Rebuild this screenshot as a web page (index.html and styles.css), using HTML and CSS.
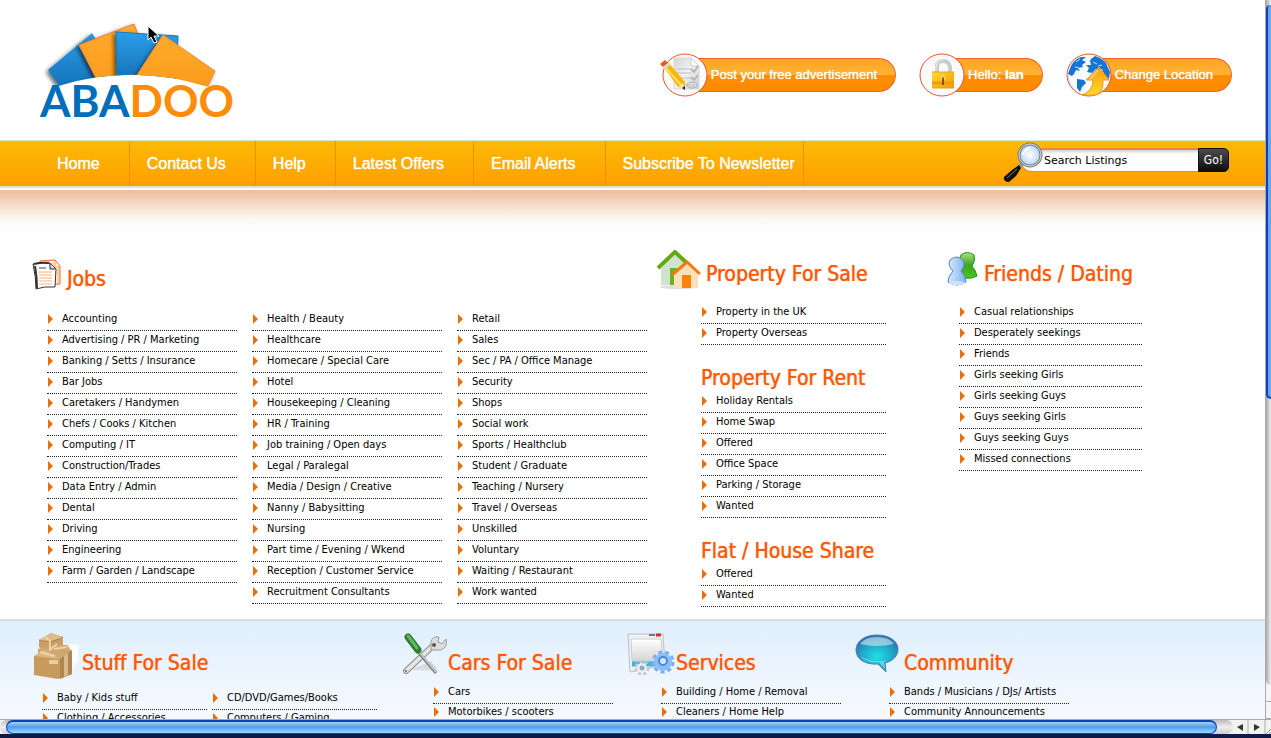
FILE: index.html
```html
<!DOCTYPE html>
<html lang="en">
<head>
<meta charset="utf-8">
<title>Abadoo</title>
<link rel="stylesheet" href="styles.css">
</head>
<body>
<div class="window">
<div class="viewport">
<div class="page">
<header class="header">
  <a class="logo" href="#" aria-label="Abadoo home">
    <svg width="200" height="116" viewBox="0 0 200 116">
      <defs>
        <linearGradient id="lb" x1="0" y1="0" x2="0" y2="1"><stop offset="0" stop-color="#2a9fe8"/><stop offset="1" stop-color="#146fb4"/></linearGradient>
        <linearGradient id="lo" x1="0" y1="0" x2="0" y2="1"><stop offset="0" stop-color="#ffab2c"/><stop offset="1" stop-color="#fb9a1c"/></linearGradient>
        <filter id="sh" x="-20%" y="-20%" width="140%" height="140%"><feDropShadow dx="-2" dy="2" stdDeviation="2" flood-color="#000" flood-opacity=".6"/></filter>
        <clipPath id="arc"><path d="M0 0H200V74L165 66Q92 44 22 65L0 72Z"/></clipPath>
      </defs>
      <g clip-path="url(#arc)">
        <path d="M8 50 52 13 82 60 22 70Z" fill="url(#lb)" filter="url(#sh)"/>
        <path d="M39 25 94 4 116 60 60 66Z" fill="url(#lo)" stroke="#f07b3a" filter="url(#sh)"/>
        <path d="M76 12 138 16 136 62 77 62Z" fill="url(#lb)" stroke="#1876bd" filter="url(#sh)"/>
        <path d="M123 15 175 51 166 70 90 66Z" fill="url(#lo)" stroke="#f58c3c" filter="url(#sh)"/>
      </g>
      <text class="logo-text" x="0" y="97"><tspan fill="#006eb8">ABA</tspan><tspan fill="#ff8c08">DOO</tspan></text>
    </svg>
  </a>
  <nav class="account" aria-label="Account">
    <a class="pill pill-post" href="#">
      <svg class="pill-icon" width="50" height="46" viewBox="0 0 50 46">
        <defs><linearGradient id="paper" x1="0" y1="0" x2="1" y2="1"><stop offset="0" stop-color="#d3d5d8"/><stop offset=".5" stop-color="#f2f2f2"/><stop offset="1" stop-color="#c8cace"/></linearGradient></defs>
        <ellipse cx="27" cy="23" rx="22" ry="21" fill="#fcfafa" stroke="#e9552a"/>
        <path d="M16 6H33L41 14V37H16Z" fill="url(#paper)" stroke="#d6d8da"/><path d="M33 6V14H41Z" fill="#fff" stroke="#c9ccd0"/>
        <path d="M19 17H35M19 21H33M19 26H33M21 33H36" stroke="#bbbec3" fill="none"/>
        <path d="M33 17l3 3 4-6M33 25l3 3 4-5" stroke="#b2b5ba" stroke-width="2" fill="none"/><ellipse cx="34" cy="33" rx="5" ry="3" fill="none" stroke="#aeb2b8"/>
        <path d="M5 14 10 10 27 30 27 37 20 35Z" fill="#f9b70c"/><path d="M6 14 23 33" stroke="#ffe25a" stroke-width="2"/><path d="M2 12 7 8 10 11 5 15Z" fill="#e9582a"/><path d="M5 15 10 11 12 13 7 17Z" fill="#ddd"/><path d="M20 35l5-4 2 6Z" fill="#ffe1a4"/><path d="M24 36l3-2v4Z" fill="#222"/>
      </svg>
      <span class="pill-label">Post your free advertisement</span>
    </a>
    <a class="pill pill-user" href="#">
      <svg class="pill-icon" width="50" height="46" viewBox="0 0 50 46">
        <defs><linearGradient id="gold" x1="0" y1="0" x2="1" y2="1"><stop offset="0" stop-color="#ffdc30"/><stop offset=".5" stop-color="#f9bb10"/><stop offset="1" stop-color="#ef9810"/></linearGradient></defs>
        <ellipse cx="27" cy="23" rx="22" ry="21" fill="#fbfafa" stroke="#e9552a"/>
        <path d="M22 20V15Q22 9 28 9T35 15V20" fill="none" stroke="#c9cccd" stroke-width="4"/><path d="M21 18V15Q22 8 28 8" fill="none" stroke="#eee" stroke-width="1"/>
        <path d="M17 20H39V36H17Z" fill="url(#gold)"/><path d="M17 20H39M17 36H39" stroke="#e59d20"/><path d="M17 31H39" stroke="#ec9f0c" stroke-width="3"/>
        <circle cx="28" cy="26" r="2" fill="#c47a10" stroke="#fff0a0"/><path d="M27 27h2v6h-2Z" fill="#8c4b00"/>
      </svg>
      <span class="pill-label">Hello: <b>Ian</b></span>
    </a>
    <a class="pill pill-location" href="#">
      <svg class="pill-icon" width="50" height="46" viewBox="0 0 50 46">
        <defs><linearGradient id="arr" x1="0" y1="0" x2="0" y2="1"><stop offset="0" stop-color="#ff9b12"/><stop offset="1" stop-color="#ffd92c"/></linearGradient></defs>
        <ellipse cx="27" cy="23" rx="22" ry="21" fill="#f7fbff" stroke="#e9552a"/>
        <path d="M7 19Q10 8 19 5L24 5 20 8 24 10 20 13 21 15 16 16 18 19 14 18 12 22 10 24 6 22Z" fill="#1675d2"/><path d="M15 27 22 28 24 31 20 35 18 40 15 36Z" fill="#1675d2"/>
        <path d="M29 7 33 4Q40 6 44 11L48 20 47 27 43 25 40 17 34 17 30 21 25 20 27 16 24 13 29 13 28 9Z" fill="#1875d0"/><path d="M14 10l4-3M13 15l4 1M31 10l4 2M36 14l4-1" stroke="#bfe3ff"/><path d="M6 22Q6 33 15 40" fill="none" stroke="#b9d8f4"/>
        <path d="M37 15 47 28H41Q42 43 31 43H20Q31 39 31 28H24Z" fill="url(#arr)" stroke="#f49a12"/><path d="M36 18 28 27" stroke="#ffc77d" stroke-width="2"/>
      </svg>
      <span class="pill-label">Change Location</span>
    </a>
  </nav>
</header>
<div class="bar">
  <nav class="menu" aria-label="Main">
    <a href="#">Home</a><a href="#">Contact Us</a><a href="#">Help</a><a href="#">Latest Offers</a><a href="#">Email Alerts</a><a href="#">Subscribe To Newsletter</a>
  </nav>
  <form class="search">
    <svg class="lens" width="42" height="44" viewBox="0 0 42 44">
      <defs><radialGradient id="glass"><stop offset="0" stop-color="#fff"/><stop offset="1" stop-color="#b4d4ee"/></radialGradient></defs>
      <path d="M22 21 16 27" stroke="#999" stroke-width="4"/><path d="M17 24 10 29 2 36Q1 41 7 41L14 35 19 27Z" fill="#111"/><path d="M15 28 5 37" stroke="#777" stroke-width="1"/>
      <circle cx="28" cy="14" r="11" fill="url(#glass)" stroke="#7b8188" stroke-width="3"/><circle cx="28" cy="14" r="11" fill="none" stroke="#d5dadf"/><path d="M21 14Q22 8 28 7" stroke="#fff" stroke-width="2" fill="none"/>
    </svg>
    <input class="search-box" type="text" value="Search Listings" aria-label="Search Listings"><button class="go" type="button">Go!</button>
  </form>
</div>
<main class="upper">
  <section class="jobs">
    <div class="head">
      <svg width="30" height="32" viewBox="0 0 30 32"><path d="M8 2 23 1 28 7 28 25 9 26Z" fill="#fff3e8" stroke="#f0612a"/><path d="M11 5H22M23 2V8H28M26 9V24" stroke="#ffa84a" fill="none"/><path d="M1 5Q10 3 18 4L24 10 23 28Q12 27 4 30Q4 18 1 5Z" fill="#fff" stroke="#333"/><path d="M3 7Q5 18 5 29" stroke="#333" stroke-width="2" fill="none"/><path d="M2 5Q10 3 17 4" stroke="#333" stroke-width="2" fill="none"/><path d="M18 4V10H23" fill="#ddd" stroke="#222"/><path d="M7 9H14" stroke="#444"/><path d="M6 13H20M7 16H20M7 19H20M7 22H20M7 25H20" stroke="#f9b080"/></svg>
      <h2>Jobs</h2>
    </div>
    <div class="lists three">
      <ul class="list"><li><a href="#">Accounting</a></li><li><a href="#">Advertising / PR / Marketing</a></li><li><a href="#">Banking / Setts / Insurance</a></li><li><a href="#">Bar Jobs</a></li><li><a href="#">Caretakers / Handymen</a></li><li><a href="#">Chefs / Cooks / Kitchen</a></li><li><a href="#">Computing / IT</a></li><li><a href="#">Construction/Trades</a></li><li><a href="#">Data Entry / Admin</a></li><li><a href="#">Dental</a></li><li><a href="#">Driving</a></li><li><a href="#">Engineering</a></li><li><a href="#">Farm / Garden / Landscape</a></li></ul>
      <ul class="list"><li><a href="#">Health / Beauty</a></li><li><a href="#">Healthcare</a></li><li><a href="#">Homecare / Special Care</a></li><li><a href="#">Hotel</a></li><li><a href="#">Housekeeping / Cleaning</a></li><li><a href="#">HR / Training</a></li><li><a href="#">Job training / Open days</a></li><li><a href="#">Legal / Paralegal</a></li><li><a href="#">Media / Design / Creative</a></li><li><a href="#">Nanny / Babysitting</a></li><li><a href="#">Nursing</a></li><li><a href="#">Part time / Evening / Wkend</a></li><li><a href="#">Reception / Customer Service</a></li><li><a href="#">Recruitment Consultants</a></li></ul>
      <ul class="list"><li><a href="#">Retail</a></li><li><a href="#">Sales</a></li><li><a href="#">Sec / PA / Office Manage</a></li><li><a href="#">Security</a></li><li><a href="#">Shops</a></li><li><a href="#">Social work</a></li><li><a href="#">Sports / Healthclub</a></li><li><a href="#">Student / Graduate</a></li><li><a href="#">Teaching / Nursery</a></li><li><a href="#">Travel / Overseas</a></li><li><a href="#">Unskilled</a></li><li><a href="#">Voluntary</a></li><li><a href="#">Waiting / Restaurant</a></li><li><a href="#">Work wanted</a></li></ul>
    </div>
  </section>
  <section class="property">
    <div class="head">
      <svg width="44" height="40" viewBox="0 0 44 40"><ellipse cx="22" cy="37" rx="19" ry="2" fill="#ddd"/><path d="M4 18 18 5 32 18V35H4Z" fill="#cfe3cd"/><path d="M13 18H20V35H13Z" fill="#67b22a"/><path d="M1 18 18 2 34 17" fill="none" stroke="#62a916" stroke-width="4"/><path d="M17 24 30 12 41 23V38H17Z" fill="#ffe0bd"/><path d="M25 25H34V38H25Z" fill="#fb830c"/><path d="M15 25 30 12 43 24" fill="none" stroke="#f37a0c" stroke-width="3"/></svg>
      <h2>Property For Sale</h2>
    </div>
    <div class="indent">
      <ul class="list"><li><a href="#">Property in the UK</a></li><li><a href="#">Property Overseas</a></li></ul>
      <h2 class="sub">Property For Rent</h2>
      <ul class="list"><li><a href="#">Holiday Rentals</a></li><li><a href="#">Home Swap</a></li><li><a href="#">Offered</a></li><li><a href="#">Office Space</a></li><li><a href="#">Parking / Storage</a></li><li><a href="#">Wanted</a></li></ul>
      <h2 class="sub">Flat / House Share</h2>
      <ul class="list"><li><a href="#">Offered</a></li><li><a href="#">Wanted</a></li></ul>
    </div>
  </section>
  <section class="friends">
    <div class="head">
      <svg width="31" height="38" viewBox="0 0 31 38"><defs><linearGradient id="gr" x1="0" y1="0" x2="0" y2="1"><stop offset="0" stop-color="#aee080"/><stop offset=".5" stop-color="#3aa81c"/><stop offset="1" stop-color="#4ac81e"/></linearGradient><linearGradient id="bl" x1="0" y1="0" x2="1" y2="0"><stop offset="0" stop-color="#d6eaff"/><stop offset="1" stop-color="#7db2f2"/></linearGradient></defs><path d="M16 15Q11 9 14 4Q20 -1 27 4Q29 9 25 15Q29 20 30 25Q23 29 14 26Q13 20 16 15Z" fill="url(#gr)" stroke="#258b14"/><path d="M6 20Q0 14 3 9Q10 3 16 9Q19 14 14 20Q19 25 19 31Q10 37 1 31Q1 25 6 20Z" fill="url(#bl)" stroke="#5686bd"/><ellipse cx="10" cy="32" rx="8" ry="2" fill="#cfe2f7"/></svg>
      <h2>Friends / Dating</h2>
    </div>
    <ul class="list"><li><a href="#">Casual relationships</a></li><li><a href="#">Desperately seekings</a></li><li><a href="#">Friends</a></li><li><a href="#">Girls seeking Girls</a></li><li><a href="#">Girls seeking Guys</a></li><li><a href="#">Guys seeking Girls</a></li><li><a href="#">Guys seeking Guys</a></li><li><a href="#">Missed connections</a></li></ul>
  </section>
</main>
<div class="lower">
  <section class="stuff">
    <div class="head">
      <svg width="47" height="48" viewBox="0 0 47 48"><path d="M37 12l9 1-1 15-6 10Z" fill="#fff" opacity=".8"/><path d="M6 8 18 1 30 5V15L18 21 6 15Z" fill="#c99d63"/><path d="M6 8 18 10 30 5M18 10V20" stroke="#a77d49" fill="none"/><path d="M6 8 18 1 30 5 18 9Z" fill="#dfbd8a"/><path d="M5 17 18 13 34 13 39 20 25 31 5 26Z" fill="#d0a76e"/><path d="M1 24 15 21 27 27 39 18V42L25 47 1 43Z" fill="#c79a5e"/><path d="M27 27 39 18V42L27 47Z" fill="#b2874f"/><path d="M1 24 11 18 27 27Z" fill="#ddb982"/><path d="M31 24l4-3v22l-4 2Z" fill="#d9ba8d"/><path d="M12 5l5 4v10M24 12l-6 5M7 20l15 4M21 17l13-2" stroke="#ecd2a6" stroke-width="2" fill="none"/><path d="M16 28h9v4h-9Z" fill="#e7cda0"/></svg>
      <h2>Stuff For Sale</h2>
    </div>
    <div class="lists two">
      <ul class="list"><li><a href="#">Baby / Kids stuff</a></li><li><a href="#">Clothing / Accessories</a></li></ul>
      <ul class="list"><li><a href="#">CD/DVD/Games/Books</a></li><li><a href="#">Computers / Gaming</a></li></ul>
    </div>
  </section>
  <section class="category">
    <div class="head">
      <svg width="44" height="42" viewBox="0 0 44 42"><path d="M7 37 36 38 28 28Z" fill="#bbb" opacity=".4"/><path d="M3 38 33 10" stroke="#888" stroke-width="6" stroke-linecap="round"/><path d="M3 38 33 10" stroke="#e4e4e4" stroke-width="4" stroke-linecap="round"/><path d="M28 9Q29 3 36 4L35 9 39 11 43 6Q45 14 38 17L28 17Z" fill="#ddd" stroke="#999"/><circle cx="31" cy="12" r="2" fill="#555"/><circle cx="3" cy="38" r="1" fill="#666"/><path d="M16 20 33 40" stroke="#888" stroke-width="3"/><path d="M17 20 33 39" stroke="#eee"/><path d="M5 4 15 17" stroke="#2f7a34" stroke-width="7" stroke-linecap="round"/><path d="M5 3 14 15" stroke="#64b85d" stroke-width="3" stroke-linecap="round"/></svg>
      <h2>Cars For Sale</h2>
    </div>
    <ul class="list"><li><a href="#">Cars</a></li><li><a href="#">Motorbikes / scooters</a></li></ul>
  </section>
  <section class="category services">
    <div class="head">
      <svg width="48" height="42" viewBox="0 0 48 42"><defs><linearGradient id="win" x1="0" y1="0" x2="0" y2="1"><stop offset="0" stop-color="#fff"/><stop offset="1" stop-color="#d5d5d5"/></linearGradient></defs><path d="M1 1H36L38 32 3 39Z" fill="#eef1f4" stroke="#bac0c6"/><path d="M4 6H34L36 28H5Z" fill="url(#win)" stroke="#ccc"/><path d="M22 2H28" stroke="#777" stroke-width="2"/><path d="M29 2H34" stroke="#d23030" stroke-width="3"/><path d="M5 31H29" stroke="#3fb4e0" stroke-width="5"/><circle cx="36" cy="29" r="10" fill="none" stroke="#78aef0" stroke-width="3" stroke-dasharray="4 3"/><circle cx="36" cy="29" r="9" fill="#8bbdf7"/><circle cx="36" cy="28" r="4" fill="#d3e8ff" stroke="#4b86d8" stroke-width="2"/><circle cx="15" cy="35" r="6" fill="none" stroke="#c4c8cc" stroke-width="3" stroke-dasharray="3 2"/><circle cx="15" cy="35" r="5" fill="#eee"/><circle cx="15" cy="35" r="2" fill="#66bfe5" stroke="#999"/></svg>
      <h2>Services</h2>
    </div>
    <ul class="list"><li><a href="#">Building / Home / Removal</a></li><li><a href="#">Cleaners / Home Help</a></li></ul>
  </section>
  <section class="category community">
    <div class="head">
      <svg width="44" height="40" viewBox="0 0 44 40"><defs><radialGradient id="bub" cx=".5" cy=".6" r=".6"><stop offset="0" stop-color="#20dfe6"/><stop offset=".6" stop-color="#20a9cb"/><stop offset="1" stop-color="#2f72ac"/></radialGradient></defs><path d="M22 1C34 1 43 7 43 15C43 22 38 27 30 29L31 38 23 30C10 31 1 25 1 16C1 7 10 1 22 1Z" fill="url(#bub)" stroke="#4a7eae"/><path d="M5 10Q10 3 22 3T39 10Q22 14 5 10Z" fill="#d8e8f5" opacity=".6"/><path d="M5 22Q18 30 33 26L29 28 30 35 24 28Q11 29 5 22Z" fill="#9bdcf0" opacity=".6"/></svg>
      <h2>Community</h2>
    </div>
    <ul class="list"><li><a href="#">Bands / Musicians / DJs/ Artists</a></li><li><a href="#">Community Announcements</a></li></ul>
  </section>
</div>
</div>
<div class="vscroll"><div class="vtrack"><div class="vthumb"></div></div><div class="vbuttons"><i></i><i></i></div></div>
</div>
<div class="hscroll">
  <div class="htrack"><div class="hthumb"></div></div>
  <svg class="harrows" width="50" height="15" viewBox="0 0 50 15"><path d="M27 0V15M44 0V15" stroke="#aaa"/><path d="M22 4V11L16 7ZM33 4V11L39 7Z" fill="#333"/><path d="M45 14 50 9M48 14 50 12" stroke="#999"/></svg>
</div>
</div>
<svg class="cursor" width="13" height="19" viewBox="0 0 13 19"><path d="M1 1V15L4 12 7 18 10 17 7 11H12Z" fill="#000" stroke="#fff"/></svg>
</body>
</html>
```

FILE: styles.css
```css
* { box-sizing: border-box; }
body { margin: 0; font-family: "DejaVu Sans Condensed", "DejaVu Sans", sans-serif; color: #000; }
a { color: inherit; text-decoration: none; }
svg { display: block; flex: none; }
h2 { margin: 0; font-size: 21px; line-height: 26px; font-weight: 400; color: #fc5a0a; text-shadow: 0 0 1px #fc5a0a; white-space: nowrap; }
ul { list-style: none; margin: 0; padding: 0; }

.window { height: 100vh; display: flex; flex-direction: column; background: #fff; border-bottom: 4px solid #101a48; overflow: hidden; }
.viewport { flex: 1; min-height: 0; display: flex; }
.page { flex: 1; min-width: 0; overflow: hidden; }

.header { height: 140px; padding: 20px 33px 0 40px; display: flex; justify-content: space-between; }
.logo-text { font: 700 44px Lato, sans-serif; }
.account { display: flex; align-items: flex-start; gap: 19px; padding-top: 32px; }
.pill { display: flex; align-items: center; }
.pill-icon { position: relative; z-index: 1; }
.pill-label { height: 34px; margin-left: -10px; padding: 0 18px 0 13px; border: 1px solid #f0652a; border-left: 0; border-radius: 0 17px 17px 0; background: linear-gradient(#ffa51f, #ffb236 50%, #ff8c04 50%, #ff8a00); color: #fff; font: 13px/32px "Liberation Sans", Arial, sans-serif; text-shadow: 0 0 1px #fff; white-space: nowrap; }

.bar { height: 48px; display: flex; justify-content: space-between; align-items: flex-start; padding: 0 36px 0 40px; border-top: 1px solid #dbe4cf; border-bottom: 2px solid #dbe4cf; background: linear-gradient(#fbba04, #ff9f02); }
.menu { display: flex; height: 100%; }
.menu a { padding: 0 29px 0 17px; border-right: 1px solid #ef8d04; color: #fff; font: 16px/45px "Liberation Sans", Arial, sans-serif; text-shadow: 0 0 1px #fff; white-space: nowrap; }
.menu a:last-child { padding-right: 8px; }
.search { display: flex; align-items: flex-start; }
.lens { position: relative; z-index: 1; margin-right: -24px; }
.search-box { width: 178px; height: 24px; margin-top: 7px; padding: 0 0 0 23px; border: 1px solid #f38a20; border-top: 2px solid #ee8340; border-right: 0; border-radius: 12px 0 0 12px; background: linear-gradient(#d8cfc8, #fff 4px); color: #000; font: 11px "DejaVu Sans", sans-serif; }
.go { width: 31px; height: 24px; margin-top: 7px; padding: 0; border: 1px solid #111; border-radius: 0 5px 5px 0; background: linear-gradient(#4c4c4c, #0c0c0c); color: #fff; font: 12px "DejaVu Sans Condensed", sans-serif; }

.upper { margin-top: 2px; height: 429px; padding: 56px 0 0 32px; display: grid; grid-template-columns: 625fr 290fr 318fr; background: linear-gradient(#efbc9b, #f4d5c0 12px, #fbeee3 24px, #fcfaf7 30px, #fff 48px); }
.head { display: flex; align-items: center; height: 48px; margin-bottom: 9px; }
.head h2 { padding-top: 8px; }
.lists { display: grid; }
.three { grid-template-columns: repeat(3, 1fr); gap: 15px; }
.two { grid-template-columns: repeat(2, 165px); gap: 5px; }
.list li { display: flex; align-items: center; padding: 0 0 3px 1px; border-bottom: 1px dotted #222; font-size: 11px; line-height: 17px; white-space: nowrap; }
.list li::before { content: ""; margin: 0 9px 0 0; border: solid transparent; border-width: 5px 0 5px 5px; border-left-color: #e8700c; }

.jobs { padding: 5px 10px 0 0; }
.jobs .head { gap: 5px; margin-bottom: 11px; }
.jobs .lists { padding-left: 15px; }
.property .head { gap: 5px; }
.indent { padding-left: 44px; margin-right: 61px; }
.sub { padding: 20px 0 1px; }
.friends .head { gap: 6px; }
.friends .list { width: 183px; margin-left: 12px; }

.lower { padding: 11px 0 0 33px; display: grid; grid-template-columns: 370fr 224fr 228fr 410fr; border-top: 2px solid #d8dfd8; background: linear-gradient(#dfeffd, #f5f9ff 90px); }
.lower .head h2 { padding-top: 14px; }
.lower .list li { line-height: 16px; }
.stuff .head { gap: 2px; margin-bottom: 10px; }
.stuff .lists { padding-left: 9px; }
.category .head { gap: 1px; margin-bottom: 4px; }
.category .head svg { margin-bottom: 4px; }
.category .list { width: 180px; margin-left: 30px; }
.category.services .list { margin-left: 34px; }
.category.community .list { margin-left: 34px; }
.community .head { gap: 5px; }

.vscroll { width: 6px; display: flex; flex-direction: column; background: #eee; border-left: 1px solid #aaa; }
.vtrack { flex: 1; padding-top: 5px; background: linear-gradient(90deg, #aaa, #eee); border-radius: 0 0 0 8px; }
.vthumb { height: 58%; border-left: 2px solid #0b3fc0; border-bottom: 2px solid #0b3fc0; border-radius: 5px 0 0 6px; background: #6ba6ec; }
.vbuttons { height: 34px; display: grid; background: #f5f5f5; }
.vbuttons i { border-bottom: 1px solid #aaa; }
.hscroll { height: 15px; display: flex; background: #f2f2f2; border-top: 1px solid #aaa; }
.htrack { flex: 1; padding: 0 16px 0 6px; border-radius: 7px; background: linear-gradient(#bbb, #eee 50%, #ccc); }
.hthumb { height: 14px; border: 1px solid #0b3fc0; border-top-width: 2px; border-radius: 7px; background: linear-gradient(#a5cdf4, #69a9ec 35%, #4e9af0 45%, #97e0ff); }
.harrows { margin-left: -12px; }
.cursor { position: absolute; left: 147px; top: 25px; }
```
